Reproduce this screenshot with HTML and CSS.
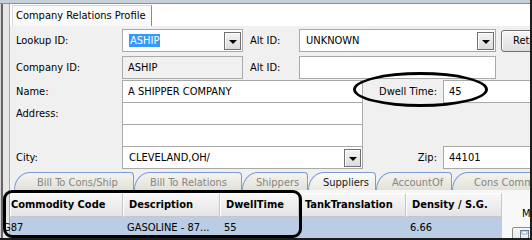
FILE: index.html
```html
<!DOCTYPE html>
<html lang="en">
<head>
  <meta charset="UTF-8">
  <title>Company Relations Profile</title>
  <link rel="stylesheet" href="styles.css">
</head>
<body>
  <div class="win">
    <div class="titlebar"></div>
    <div class="body">
      <div class="lframe"></div>
      <div class="main">
        <!-- page tab -->
        <div class="tabhead">
          <div class="ptab">Company Relations Profile</div>
        </div>

        <!-- form fields -->
        <div class="form">
          <div class="row">
            <div class="lbl">Lookup ID:</div>
            <div class="combo w121"><span class="sel">ASHIP</span><span class="dd"></span></div>
            <div class="lbl2">Alt ID:</div>
            <div class="combo w197"><span class="val">UNKNOWN</span><span class="dd"></span></div>
            <div class="btn">Retrieve</div>
          </div>
          <div class="row r2">
            <div class="lbl">Company ID:</div>
            <div class="box ro w121">ASHIP</div>
            <div class="lbl2">Alt ID:</div>
            <div class="box w197"></div>
          </div>
          <div class="row r3">
            <div class="lbl">Name:</div>
            <div class="box w241">A SHIPPER COMPANY</div>
            <div class="rlbl">Dwell Time:</div>
            <div class="box wide">45</div>
          </div>
          <div class="row stack">
            <div class="lbl">Address:</div>
            <div class="box w241"></div>
          </div>
          <div class="row stack">
            <div class="lbl"></div>
            <div class="box w241"></div>
          </div>
          <div class="row stack">
            <div class="lbl">City:</div>
            <div class="combo w241"><span class="val">CLEVELAND,OH/</span><span class="dd"></span></div>
            <div class="rlbl">Zip:</div>
            <div class="box wide">44101</div>
          </div>
        </div>

        <!-- lower tabs -->
        <div class="btabs">
          <div class="btab t1">Bill To Cons/Ship</div>
          <div class="btab t2">Bill To Relations</div>
          <div class="btab t3">Shippers</div>
          <div class="btab t4 active">Suppliers</div>
          <div class="btab t5">AccountOf</div>
          <div class="btab t6">Cons Commodities</div>
        </div>

        <!-- commodity grid -->
        <div class="grid">
          <div class="gtable">
            <div class="hd">Commodity Code</div>
            <div class="hd">Description</div>
            <div class="hd">DwellTime</div>
            <div class="hd">TankTranslation</div>
            <div class="hd">Density / S.G.</div>
            <div class="cell first"><span>G87</span></div>
            <div class="cell">GASOLINE - 87...</div>
            <div class="cell">55</div>
            <div class="cell"></div>
            <div class="cell">6.66</div>
          </div>
          <div class="side">
            <div class="mlbl">M</div>
            <div class="sbtn">
              <svg width="9" height="9" viewBox="0 0 9 9">
                <rect x="0.5" y="0.5" width="8" height="8" fill="#e8eef6" stroke="#6a7d99"/>
                <rect x="2" y="1" width="5" height="3" fill="#ffffff" stroke="#6a7d99" stroke-width="0.6"/>
              </svg>
            </div>
          </div>
        </div>
      </div>
    </div>

    <!-- annotations drawn over the screenshot -->
    <div class="ellipse"></div>
    <div class="mark"></div>
  </div>
</body>
</html>
```

FILE: styles.css
```css
* {
  box-sizing: border-box;
}

body {
  margin: 0;
  font-family: "DejaVu Sans Condensed", "DejaVu Sans", sans-serif;
  font-stretch: condensed;
  font-size: 11px;
  color: #000;
}

.win {
  position: relative;
  width: 532px;
  height: 240px;
  overflow: hidden;
  display: flex;
  flex-direction: column;
  background: #f0f0f0;
  border-right: 2px solid #1c1c1c;
  border-bottom: 2px solid #1c1c1c;
}

.titlebar {
  flex: none;
  height: 4px;
  background: #c6d0db;
  border-bottom: 1px solid #8792a0;
}

.body {
  flex: 1;
  display: flex;
  min-height: 0;
}

.lframe {
  flex: none;
  width: 10px;
  background: linear-gradient(to right, #d4d4d4 0 1px, #656565 1px 3px, #e6e6e6 3px 9px, #a8a8a8 9px 10px);
}

.main {
  flex: 1;
  min-width: 0;
  display: flex;
  flex-direction: column;
}

/* page tab */
.tabhead {
  flex: none;
  height: 22px;
  background: #fff;
  padding: 1px 0 0 2px;
}

.ptab {
  width: 140px;
  height: 21px;
  line-height: 20px;
  padding-left: 3px;
  background: #f9f9f9;
  border: 1px solid #d6d6d6;
  border-right-color: #8a8a8a;
  border-bottom: none;
  white-space: nowrap;
}

/* form */
.form {
  flex: none;
  height: 144px;
  padding: 3px 0 0 6px;
}

.row {
  display: flex;
  align-items: center;
  height: 23px;
  white-space: nowrap;
}

.row > * {
  flex: none;
}

.r2 {
  margin-top: 4px;
}

.r3 {
  margin-top: 1px;
}

.stack {
  margin-top: -1px;
}

.lbl {
  width: 106px;
}

.lbl2 {
  width: 49px;
  margin-left: 7px;
}

.rlbl {
  width: 80px;
  text-align: right;
  padding-right: 6px;
}

.box,
.combo {
  height: 23px;
  line-height: 21px;
  border: 1px solid #a9a9a9;
  background: #fff;
  padding-left: 5px;
}

.combo {
  display: flex;
  align-items: center;
  padding-right: 1px;
}

.ro {
  background: #f0f0f0;
}

.w121 { width: 121px; }
.w197 { width: 197px; }
.w241 { width: 241px; }
.wide { width: 120px; }

.sel {
  background: #3399ff;
  color: #fff;
  line-height: 13px;
  padding: 0 1px;
  margin-left: 1px;
}

.val {
  margin-left: 1px;
}

.dd {
  margin-left: auto;
  width: 17px;
  height: 18px;
  border: 1px solid #707070;
  background: linear-gradient(#f4f4f4, #dcdcdc);
  box-shadow: inset 1px 1px 0 #fff;
  display: flex;
  align-items: center;
  justify-content: center;
}

.dd::after {
  content: "";
  margin-top: 2px;
  border-left: 4px solid transparent;
  border-right: 4px solid transparent;
  border-top: 4px solid #000;
}

.btn {
  margin-left: 5px;
  width: 80px;
  height: 22px;
  line-height: 19px;
  padding-left: 11px;
  border: 1px solid #707070;
  border-radius: 3px;
  background: linear-gradient(#f6f6f6, #dedede);
  box-shadow: inset 1px 1px 0 #fff;
}

/* lower tabs */
.btabs {
  flex: none;
  height: 18px;
  margin-top: 2px;
  display: flex;
  align-items: flex-end;
  padding-left: 4px;
  white-space: nowrap;
}

.btab {
  flex: none;
  height: 18px;
  padding-top: 3px;
  color: #858585;
  background: linear-gradient(#f4f3ee, #e2e1d9);
  border: 1px solid #7b9bd1;
  border-bottom: none;
  border-radius: 16px 4px 0 0 / 18px 4px 0 0;
}

.btab.active {
  color: #1a1a1a;
  background: linear-gradient(#fbfbf8, #ebeae4);
}

.t1 { width: 120px; padding-left: 22px; }
.t2 { width: 108px; padding-left: 15px; }
.t3 { width: 66px; padding-left: 13px; }
.t4 { width: 68px; padding-left: 14px; }
.t5 { width: 76px; padding-left: 15px; }
.t6 { width: 110px; padding-left: 21px; }

/* grid */
.grid {
  flex: 1;
  display: flex;
  padding-top: 3px;
  background: #f6f6f6;
}

.gtable {
  flex: none;
  display: grid;
  grid-template-columns: 113px 97px 79px 107px 96px;
  grid-template-rows: 24px 21px;
}

.hd {
  font-weight: bold;
  line-height: 22px;
  padding-left: 5px;
  white-space: nowrap;
  overflow: hidden;
  background: linear-gradient(#f8f8f8, #e4e4e4);
  border-top: 1px solid #fff;
  border-left: 1px solid #fff;
  border-right: 1px solid #c6c6c6;
  border-bottom: 1px solid #c6c6c6;
}

.hd:first-child {
  padding-left: 0;
}

.cell {
  background: #bacde4;
  line-height: 21px;
  padding-left: 4px;
  white-space: nowrap;
}

.cell.first span {
  margin-left: -11px;
}

.side {
  flex: 1;
  background: #f8f8f8;
  padding: 14px 0 0 20px;
}

.sbtn {
  margin: 7px 0 0 -10px;
  width: 30px;
  height: 20px;
  border: 1px solid #8c8c8c;
  border-radius: 2px;
  background: linear-gradient(#f6f6f6, #e0e0e0);
  padding: 2px 0 0 7px;
}

.sbtn svg {
  display: block;
}

/* annotations */
.ellipse {
  position: absolute;
  left: 353px;
  top: 72px;
  width: 135px;
  height: 35px;
  border: 3px solid #000;
  border-radius: 50%;
}

.mark {
  position: absolute;
  left: 3px;
  top: 190px;
  width: 299px;
  height: 48px;
  border: 3px solid #000;
  border-radius: 9px;
}
```
